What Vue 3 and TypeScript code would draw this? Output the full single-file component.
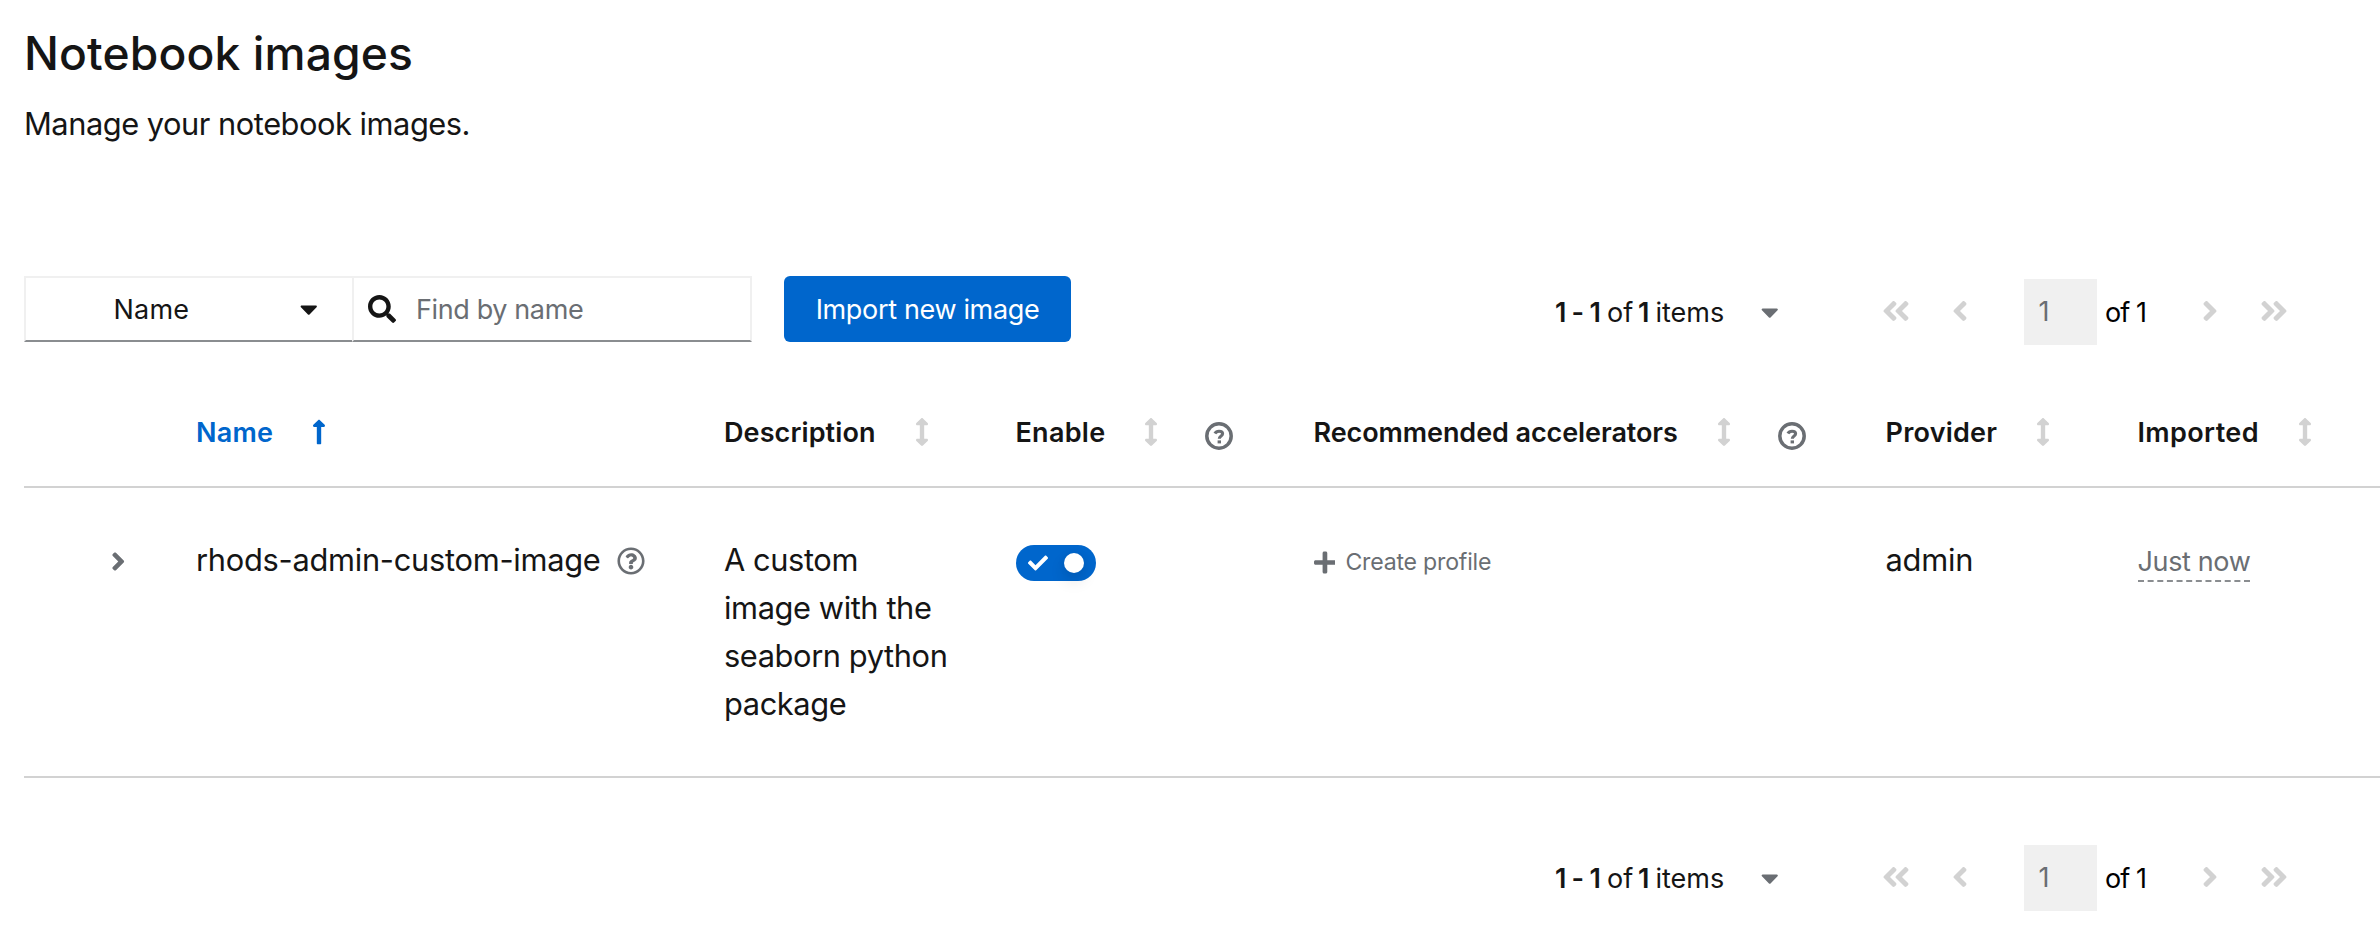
<script setup lang="ts">
import { defineComponent, h, ref } from 'vue'

interface Glyph {
  w: number
  d: string
}

const glyphs: Record<string, Glyph> = {
  caret: {
    w: 320,
    d: 'M31.3 192h257.3c17.8 0 26.7 21.5 14.1 34.1L174.1 354.7c-7.8 7.8-20.5 7.8-28.3 0L17.2 226.1C4.6 213.5 13.6 192 31.3 192z',
  },
  search: {
    w: 512,
    d: 'M505 442.7L405.3 343c-4.5-4.5-10.6-7-17-7H372c27.6-35.3 44-79.7 44-128C416 93.1 322.9 0 208 0S0 93.1 0 208s93.1 208 208 208c48.3 0 92.7-16.4 128-44v16.3c0 6.4 2.5 12.5 7 17l99.7 99.7c9.4 9.4 24.6 9.4 33.9 0l28.3-28.3c9.4-9.4 9.4-24.6.1-34zM208 336c-70.7 0-128-57.2-128-128 0-70.7 57.2-128 128-128 70.7 0 128 57.2 128 128 0 70.7-57.2 128-128 128z',
  },
  angle: {
    w: 256,
    d: 'M31.7 239l136-136c9.4-9.4 24.6-9.4 33.9 0l22.6 22.6c9.4 9.4 9.4 24.6 0 33.9L127.9 256l96.4 96.4c9.4 9.4 9.4 24.6 0 33.9L201.7 409c-9.4 9.4-24.6 9.4-33.9 0l-136-136c-9.5-9.4-9.5-24.6-.1-34z',
  },
  doubleAngle: {
    w: 448,
    d: 'M223.7 239l136-136c9.4-9.4 24.6-9.4 33.9 0l22.6 22.6c9.4 9.4 9.4 24.6 0 33.9L319.9 256l96.4 96.4c9.4 9.4 9.4 24.6 0 33.9L393.7 409c-9.4 9.4-24.6 9.4-33.9 0l-136-136c-9.5-9.4-9.5-24.6-.1-34zm-192 34l136 136c9.4 9.4 24.6 9.4 33.9 0l22.6-22.6c9.4-9.4 9.4-24.6 0-33.9L127.9 256l96.4-96.4c9.4-9.4 9.4-24.6 0-33.9L201.7 103c-9.4-9.4-24.6-9.4-33.9 0l-136 136c-9.5 9.4-9.5 24.6-.1 34z',
  },
  sortUp: {
    w: 256,
    d: 'M88 166.059V468c0 6.627 5.373 12 12 12h56c6.627 0 12-5.373 12-12V166.059h46.059c21.382 0 32.09-25.851 16.971-40.971l-86.059-86.059c-9.373-9.373-24.569-9.373-33.941 0l-86.059 86.059c-15.119 15.119-4.411 40.971 16.971 40.971H88z',
  },
  sort: {
    w: 256,
    d: 'M214.059 377.941H168V134.059h46.059c21.382 0 32.09-25.851 16.971-40.971L144.971 7.029c-9.373-9.373-24.568-9.373-33.941 0L24.971 93.088c-15.119 15.119-4.411 40.971 16.971 40.971H88v243.882H41.941c-21.382 0-32.09 25.851-16.971 40.971l86.059 86.059c9.373 9.373 24.568 9.373 33.941 0l86.059-86.059c15.12-15.119 4.412-40.971-16.971-40.971z',
  },
  check: {
    w: 512,
    d: 'M173.898 439.404l-166.4-166.4c-9.997-9.997-9.997-26.206 0-36.204l36.203-36.204c9.997-9.998 26.207-9.998 36.204 0L192 312.69 432.095 72.596c9.997-9.997 26.207-9.997 36.204 0l36.203 36.204c9.997 9.997 9.997 26.206 0 36.204l-294.4 294.401c-9.998 9.997-26.207 9.997-36.204-.001z',
  },
  plus: {
    w: 448,
    d: 'M416 208H272V64c0-17.67-14.33-32-32-32h-32c-17.67 0-32 14.33-32 32v144H32c-17.67 0-32 14.33-32 32v32c0 17.67 14.33 32 32 32h144v144c0 17.67 14.33 32 32 32h32c17.67 0 32-14.33 32-32V304h144c17.67 0 32-14.33 32-32v-32c0-17.67-14.33-32-32-32z',
  },
  question: {
    w: 512,
    d: 'M256 8C119.043 8 8 119.083 8 256c0 136.997 111.043 248 248 248s248-111.003 248-248C504 119.083 392.957 8 256 8zm0 448c-110.532 0-200-89.431-200-200 0-110.495 89.472-200 200-200 110.491 0 200 89.471 200 200 0 110.53-89.431 200-200 200zm107.244-255.2c0 67.052-72.421 68.084-72.421 92.863V300c0 6.627-5.373 12-12 12h-45.647c-6.627 0-12-5.373-12-12v-8.659c0-35.745 27.1-50.034 47.579-61.516 17.561-9.845 28.324-16.541 28.324-29.579 0-17.246-21.999-28.693-39.784-28.693-23.189 0-33.894 10.977-48.942 29.969-4.057 5.12-11.46 6.071-16.666 2.124l-27.824-21.098c-5.107-3.872-6.251-11.066-2.644-16.363C184.846 131.491 214.94 112 261.794 112c49.071 0 101.45 38.304 101.45 88.8zM298 368c0 23.159-18.841 42-42 42s-42-18.841-42-42 18.841-42 42-42 42 18.841 42 42z',
  },
}

const Icon = defineComponent({
  props: {
    name: { type: String, required: true },
    size: { type: Number, default: 28 },
  },
  setup(props) {
    return () => {
      const g = glyphs[props.name]
      return h(
        'svg',
        {
          viewBox: `0 0 ${g.w} 512`,
          width: (g.w / 512) * props.size,
          height: props.size,
          fill: 'currentColor',
          'aria-hidden': 'true',
        },
        [h('path', { d: g.d })],
      )
    }
  },
})

interface Column {
  key: string
  label: string
  sorted?: boolean
  help?: boolean
}

const columns: Column[] = [
  { key: 'name', label: 'Name', sorted: true },
  { key: 'description', label: 'Description' },
  { key: 'enable', label: 'Enable', help: true },
  { key: 'accelerators', label: 'Recommended accelerators', help: true },
  { key: 'provider', label: 'Provider' },
  { key: 'imported', label: 'Imported' },
]

const paginations = ['top', 'bottom'] as const
const enabled = ref(true)
</script>

<template>
  <main class="page">
    <h1 class="title">Notebook images</h1>
    <p class="subtitle">Manage your notebook images.</p>

    <template v-for="place in paginations" :key="place">
      <div class="toolbar" :class="place">
        <div v-if="place === 'top'" class="filters">
          <button class="attribute" type="button">
            <span class="attribute-label">Name</span>
            <Icon name="caret" />
          </button>
          <label class="search">
            <Icon name="search" />
            <span class="placeholder">Find by name</span>
          </label>
          <button class="primary" type="button">Import new image</button>
        </div>
        <nav class="pagination">
          <span class="summary"><b class="range">1 - 1</b><span class="of">of</span><b class="total">1</b><span class="items">items</span></span>
          <Icon class="caret" name="caret" />
          <Icon class="nav" name="doubleAngle" :size="32" />
          <Icon class="nav" name="angle" :size="32" />
          <span class="page-input">1</span>
          <span class="page-count">of 1</span>
          <Icon class="nav flip" name="angle" :size="32" />
          <Icon class="nav flip" name="doubleAngle" :size="32" />
        </nav>
      </div>

      <section v-if="place === 'top'" class="table">
        <div class="row head">
          <span></span>
          <div v-for="c in columns" :key="c.key" class="th" :class="[c.key, { sorted: c.sorted }]">
            <span>{{ c.label }}</span>
            <Icon class="sort" :name="c.sorted ? 'sortUp' : 'sort'" />
            <svg v-if="c.help" class="help" viewBox="0 0 28 28" width="28" height="28" fill="none" stroke="currentColor">
              <circle cx="14" cy="14" r="12.2" stroke-width="3.5" />
              <path d="M9.9 11.6C10.8 9.9 12.2 9.2 14 9.2c2.2 0 3.6 1 3.6 2.5 0 2.3-3.3 2.2-3.3 5.1" stroke-width="3.1" />
              <path d="M12.6 19.9h3.4" stroke-width="3" />
            </svg>
          </div>
        </div>
        <div class="row body">
          <Icon class="expand" name="angle" :size="29" />
          <div class="name-cell">
            <span class="name-text">rhods-admin-custom-image</span>
            <Icon name="question" />
          </div>
          <div class="description-cell">A custom<br />image with the<br />seaborn python<br />package</div>
          <div>
            <button class="switch" type="button" role="switch" :aria-checked="enabled" @click="enabled = !enabled">
              <Icon name="check" :size="20" />
              <i class="knob"></i>
            </button>
          </div>
          <div class="create">
            <Icon name="plus" :size="25" />
            <span>Create profile</span>
          </div>
          <div class="provider-cell">admin</div>
          <div><span class="time">Just now</span></div>
        </div>
      </section>
    </template>
  </main>
</template>

<style scoped>
.page {
  width: 2380px;
  height: 926px;
  overflow: hidden;
  box-sizing: border-box;
  padding: 22px 0 0 24px;
  background: #fff;
  color: #151515;
  font-family: Inter, "Liberation Sans", sans-serif;
  font-size: 27px;
}
svg {
  display: block;
  flex: none;
}
button {
  font: inherit;
  color: inherit;
  border: 0;
  margin: 0;
}
.title {
  margin: 0;
  font-size: 46.2px;
  font-weight: 500;
  line-height: 62px;
  letter-spacing: 0.12px;
}
.subtitle {
  margin: 16px 0 0;
  font-size: 30.8px;
  line-height: 48px;
  letter-spacing: -0.47px;
}
.toolbar {
  display: flex;
  justify-content: space-between;
  align-items: flex-start;
  height: 66px;
}
.toolbar.top {
  margin-top: 128px;
}
.toolbar.bottom {
  justify-content: flex-end;
  margin-top: 64px;
}
.filters {
  display: flex;
  height: 66px;
}
.attribute {
  display: flex;
  align-items: center;
  justify-content: space-between;
  box-sizing: border-box;
  width: 328px;
  padding: 0 35px 0 87.5px;
  background: #fff;
  border: 2px solid #f0f0f0;
  border-right: 0;
  border-bottom-color: #8a8d90;
  letter-spacing: 0.2px;
}
.search {
  display: flex;
  align-items: center;
  box-sizing: border-box;
  width: 400px;
  padding-left: 14px;
  gap: 20px;
  border: 2px solid #f0f0f0;
  border-bottom-color: #8a8d90;
}
.placeholder {
  color: #6a6e73;
  letter-spacing: -0.38px;
}
.primary {
  width: 287px;
  margin-left: 32px;
  padding: 0;
  border-radius: 6px;
  background: #06c;
  color: #fff;
  letter-spacing: -0.34px;
}
.pagination {
  display: grid;
  grid-template-columns: 206px 121px 70px 72px 81px 97px 58px 120px;
  align-items: center;
  height: 66px;
  margin-top: 3px;
}
.summary {
  display: flex;
  white-space: nowrap;
}
.summary b {
  font-weight: 600;
}
.range {
  width: 52px;
  letter-spacing: -0.8px;
}
.of {
  width: 31px;
}
.total {
  width: 17.5px;
}
.caret {
  color: #6a6e73;
}
.nav {
  color: #d2d2d2;
  margin-top: -3px;
}
.flip {
  transform: scaleX(-1);
}
.page-input {
  box-sizing: border-box;
  width: 73px;
  height: 66px;
  padding-left: 14.5px;
  line-height: 66px;
  background: #f0f0f0;
  color: #6a6e73;
}
.page-count {
  color: #000;
  letter-spacing: -0.9px;
}
.table {
  margin-top: 36px;
}
.row {
  display: grid;
  grid-template-columns: 172px 528px 291.5px 298px 572px 252px 1fr;
  box-sizing: border-box;
  border-bottom: 2px solid #d2d2d2;
}
.head {
  height: 110px;
  align-items: center;
}
.th {
  display: flex;
  align-items: center;
  font-weight: 600;
  white-space: nowrap;
  letter-spacing: 0.1px;
}
.th.name,
.th.enable {
  letter-spacing: 0.27px;
}
.th.accelerators {
  letter-spacing: -0.08px;
}
.th.provider {
  letter-spacing: 0.22px;
}
.th.imported {
  letter-spacing: 0.38px;
}
.sorted {
  color: #06c;
}
.sort {
  margin-left: 39px;
  color: #d2d2d2;
}
.sorted .sort {
  color: #06c;
}
.help {
  margin: 8px 0 0 47px;
  color: #6a6e73;
}
.body {
  height: 290px;
  padding-top: 48px;
  font-size: 30.8px;
  line-height: 48px;
}
.expand {
  margin: 11px 0 0 87px;
  transform: scaleX(-1);
  color: #6a6e73;
}
.name-cell {
  display: flex;
  align-items: flex-start;
  gap: 16px;
  letter-spacing: -0.27px;
}
.name-cell svg {
  margin-top: 11px;
  color: #6a6e73;
}
.description-cell {
  letter-spacing: -0.4px;
}
.switch {
  display: flex;
  align-items: center;
  justify-content: space-between;
  box-sizing: border-box;
  width: 80px;
  height: 36px;
  margin-top: 9px;
  padding: 0 12px;
  border-radius: 18px;
  background: #06c;
  color: #fff;
}
.knob {
  width: 20px;
  height: 20px;
  border-radius: 50%;
  background: #fff;
  box-shadow: 0 8px 16px rgba(3, 3, 3, 0.12), 0 0 8px rgba(3, 3, 3, 0.06);
}
.create {
  display: flex;
  gap: 10px;
  color: #6a6e73;
  font-size: 23.1px;
  line-height: 53px;
  letter-spacing: -0.2px;
}
.create svg {
  margin-top: 13.5px;
}
.provider-cell {
  letter-spacing: -0.22px;
}
.time {
  display: inline-block;
  height: 45px;
  box-sizing: border-box;
  border-bottom: 2px dashed #8a8d90;
  color: #6a6e73;
  font-size: 27px;
  line-height: 50px;
  letter-spacing: -0.36px;
}
</style>
